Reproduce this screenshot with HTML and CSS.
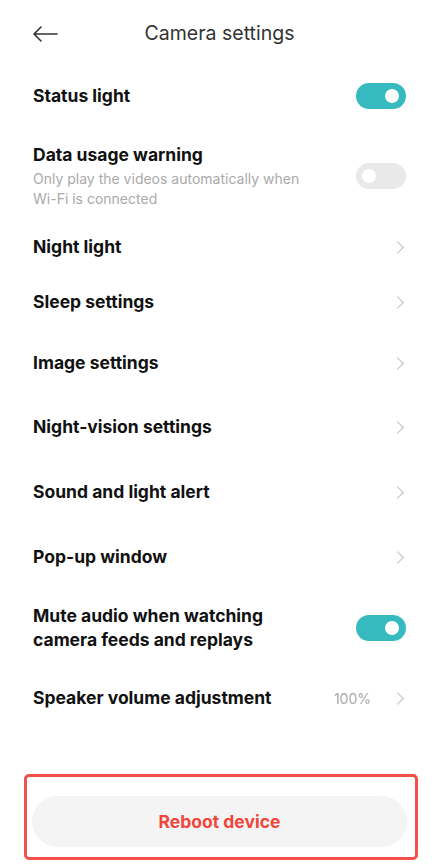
FILE: index.html
```html
<html>
    <head>
        <meta charset="UTF-8">
        <meta name="viewport" content="width=device-width, initial-scale=1.0">

        <title>Camera settings</title>

        <link rel="stylesheet" href="styles.css">
    </head>

    <body>
        <div class="header">
            <svg class="back" width="26" height="16" viewBox="0 0 26 16">
                <path d="M25 8H2M9 1L2 8l7 7" fill="none" stroke="#333" stroke-width="1.6" stroke-linecap="round" stroke-linejoin="round"/>
            </svg>
            <h1>Camera settings</h1>
        </div>

        <div class="list">
            <div class="row h60">
                <span class="label">Status light</span>
                <span class="toggle on"><i></i></span>
            </div>
            <div class="row h100">
                <div class="text">
                    <span class="label">Data usage warning</span>
                    <p class="sub">Only play the videos automatically when Wi-Fi is connected</p>
                </div>
                <span class="toggle"><i></i></span>
            </div>
            <div class="row h42">
                <span class="label">Night light</span>
                <span class="chev"></span>
            </div>
            <div class="row h68">
                <span class="label">Sleep settings</span>
                <span class="chev"></span>
            </div>
            <div class="row h54">
                <span class="label">Image settings</span>
                <span class="chev"></span>
            </div>
            <div class="row h74">
                <span class="label">Night-vision settings</span>
                <span class="chev"></span>
            </div>
            <div class="row h56">
                <span class="label">Sound and light alert</span>
                <span class="chev"></span>
            </div>
            <div class="row h74">
                <span class="label">Pop-up window</span>
                <span class="chev"></span>
            </div>
            <div class="row h68">
                <span class="label wrap">Mute audio when watching camera feeds and replays</span>
                <span class="toggle on"><i></i></span>
            </div>
            <div class="row h72">
                <span class="label">Speaker volume adjustment</span>
                <span class="value">100%</span>
                <span class="chev"></span>
            </div>
        </div>

        <div class="footer">
            <button class="reboot">Reboot device</button>
        </div>
    </body>
</html>
```
FILE: styles.css
```css
body{
    margin: 0;
    background-color: #fff;
    font-family: Inter, Roboto, sans-serif;
    color: #111;
}
.header{
    height: 66px;
    display: flex;
    align-items: center;
    justify-content: center;
    position: relative;
}
.back{
    position: absolute;
    left: 32px;
    top: 26px;
}
h1{
    margin: 0;
    font-size: 19.5px;
    font-weight: 400;
    color: #333;
}
.list{
    padding: 0 33px;
}
.row{
    display: flex;
    align-items: center;
}
.h42{ height: 42px; }
.h54{ height: 54px; }
.h56{ height: 56px; }
.h60{ height: 60px; }
.h68{ height: 68px; }
.h72{ height: 72px; }
.h74{ height: 74px; }
.h100{ height: 100px; }
.label{
    font-size: 17.5px;
    font-weight: 700;
    flex: 1;
    line-height: 24px;
}
.wrap{
    max-width: 260px;
}
.text{
    flex: 1;
    display: flex;
    flex-direction: column;
    padding-right: 40px;
}
.sub{
    margin: 2px 0 0;
    font-size: 14px;
    line-height: 20px;
    color: #aaa;
}
.toggle{
    width: 50px;
    height: 26px;
    border-radius: 13px;
    background-color: #e9e9e9;
    display: flex;
    align-items: center;
    padding: 0 6px;
    box-sizing: border-box;
    margin-left: auto;
}
.toggle i{
    width: 14px;
    height: 14px;
    border-radius: 50%;
    background-color: #fff;
}
.toggle.on{
    background-color: #36babf;
    justify-content: flex-end;
    padding: 0 7px;
}
.chev{
    width: 8px;
    height: 8px;
    border-top: 1.3px solid #bbb;
    border-right: 1.3px solid #bbb;
    transform: rotate(45deg);
    margin-right: 4px;
}
.value{
    font-size: 14px;
    color: #aaa;
    margin-right: 22px;
}
.footer{
    margin: 40px 21px 0 24px;
    border: 3px solid #f4504a;
    border-radius: 5px;
    padding: 19px 8px 10px 5px;
}
.reboot{
    width: 100%;
    height: 51px;
    border: none;
    border-radius: 26px;
    background-color: #f4f4f4;
    color: #f0463c;
    font-family: Inter, Roboto, sans-serif;
    font-size: 17.5px;
    font-weight: 700;
}
```
